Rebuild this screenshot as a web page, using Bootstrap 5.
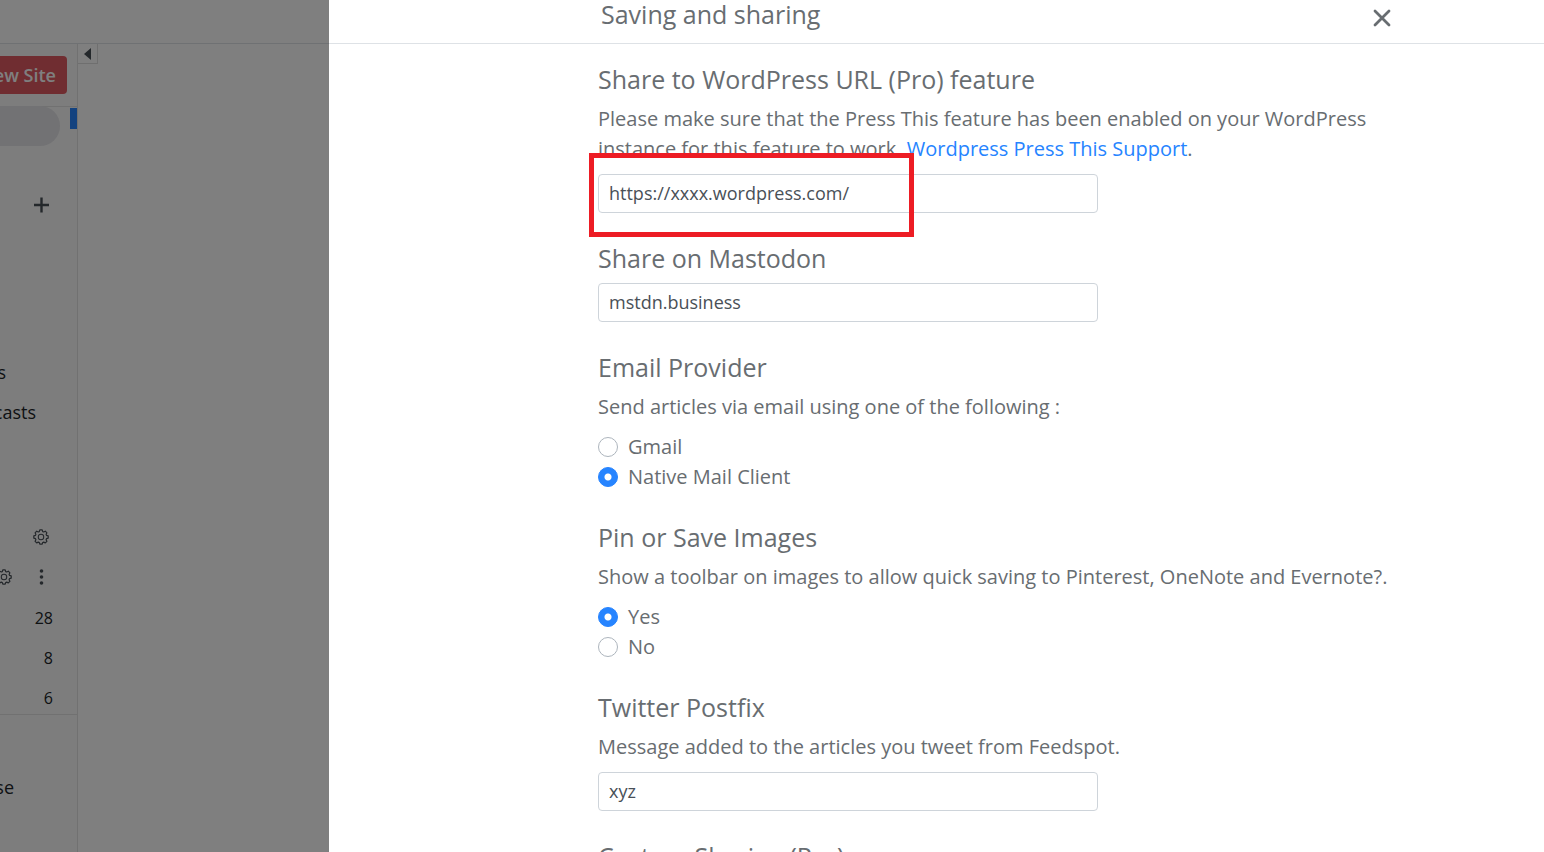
<!DOCTYPE html>
<html lang="en">
<head>
<meta charset="utf-8">
<meta name="viewport" content="width=device-width, initial-scale=1">
<title>Saving and sharing</title>
<link href="https://cdn.jsdelivr.net/npm/bootstrap@5.3.0/dist/css/bootstrap.min.css" rel="stylesheet">
<style>
  body { font-family: "Open Sans", "Noto Sans", sans-serif; font-size: 20px; line-height: 30px; color: #686d71; }
  .top-strip { height: 44px; border-bottom: 1px solid #dee2e6; }
  .shell { width: 329px; background: #fff; }
  .shade { background: rgba(0, 0, 0, .5); }
  .side { width: 78px; background: #fafafa; border-right: 1px solid #e2e2e2; font-size: 18px; color: #212529; white-space: nowrap; }
  .side-row { height: 40px; display: flex; align-items: center; justify-content: flex-end; flex-shrink: 0; }
  .side-top { height: 63px; border-bottom: 1px solid #e2e2e2; padding-right: 10px; }
  .side-add { margin: 38px 0 127px; }
  .side-tools { margin-top: 82px; }
  .btn-site { background: #e05a62; color: #fff; font-size: 18px; font-weight: 600; line-height: 24px; padding: 6px 10px; border-radius: 4px; }
  .pill { width: 120px; height: 40px; border-radius: 20px; background: #e4e4e8; margin: 0 17px 2px 0; flex: none; }
  .marker { width: 7px; height: 21px; top: 1px; background: #2684ff; }
  .count { font-size: 16px; padding: 8px 24px 0 0; }
  .ico-row { gap: 21px; padding-right: 28px; color: #495057; }
  .side-tools .ico-row { padding-top: 6px; }
  .ico-btn { border: 0; background: none; padding: 0; color: inherit; display: flex; flex: none; }
  .collapse-btn { width: 20px; height: 20px; border: 1px solid #dedede; border-width: 0 1px 1px 0; background: #fff; padding: 0; color: #495057; }
  .side-end { border-top: 1px solid #e2e2e2; padding-top: 52px; }
  .col-main { padding-left: 269px; }
  .panel-body { padding-top: 19px; }
  .inner { max-width: 808px; }
  h1, h2 { font-size: 25px; font-weight: 500; line-height: 32px; margin: 0; }
  h1 { line-height: 28px; padding-left: 3px; }
  h2 { margin-bottom: 9px; }
  .inner p { margin-bottom: 10px; }
  .inner section { margin-bottom: 29px; }
  .inner a { color: #2684ff; text-decoration: none; }
  .field { max-width: 500px; }
  .form-control { height: 39px; font-size: 18px; line-height: 27px; padding: 4px 10px 6px; color: #495057; border-color: #ced4da; border-radius: 4px; }
  .form-check { min-height: 30px; padding-left: 30px; margin: 0; }
  .form-check .form-check-input { width: 20px; height: 20px; margin: 5px 0 0 -30px; border-color: #adb5bd; }
  .form-check .form-check-input:checked { background-color: #2684ff; border-color: #2684ff; background-image: radial-gradient(circle, #fff 0 3px, transparent 4px); }
  .callout { border: 5px solid #ed1c24; width: 325px; height: 84px; left: -9px; top: -21px; pointer-events: none; }
  .close-btn { padding: 8px 14px 0 0; }
</style>
</head>
<body>
<svg class="d-none" aria-hidden="true">
  <symbol id="gear" viewBox="0 0 16 16">
    <path fill="currentColor" d="M8 4.754a3.246 3.246 0 1 0 0 6.492 3.246 3.246 0 0 0 0-6.492zM5.754 8a2.246 2.246 0 1 1 4.492 0 2.246 2.246 0 0 1-4.492 0z"/>
    <path fill="none" stroke="currentColor" stroke-width="1.2" stroke-linejoin="round" d="M6.8 .9h2.4l.5 1.7 1 .4 1.6-.8 1.6 1.6-.8 1.6.4 1 1.7.5v2.3l-1.7.5-.4 1 .8 1.6-1.6 1.6-1.6-.8-1 .4-.5 1.7H6.8l-.5-1.7-1-.4-1.6.8-1.6-1.6.8-1.6-.4-1L.8 9.2V6.9l1.7-.5.4-1-.8-1.6 1.6-1.6 1.6.8 1-.4z"/>
  </symbol>
</svg>
<div class="d-flex vh-100 overflow-hidden">
  <div class="shell position-relative flex-shrink-0 d-flex flex-column overflow-hidden">
    <header class="top-strip flex-shrink-0"></header>
    <div class="d-flex flex-grow-1">
      <nav class="side overflow-hidden flex-shrink-0" aria-label="Feeds">
        <div class="side-row side-top"><button type="button" class="btn btn-site flex-shrink-0">New Site</button></div>
        <div class="side-row position-relative">
          <span class="pill"></span>
          <span class="marker position-absolute end-0"></span>
        </div>
        <div class="side-row ico-row side-add">
          <button type="button" class="ico-btn" aria-label="Add"><svg width="16" height="16" viewBox="0 0 16 16" stroke="currentColor" stroke-width="2.4" fill="none"><path d="M8.5 .5v15M1 8h15"/></svg></button>
        </div>
        <div class="side-row" style="padding-right:71px">s</div>
        <div class="side-row" style="padding-right:41px">Podcasts</div>
        <div class="side-tools">
          <div class="side-row ico-row">
            <button type="button" class="ico-btn" aria-label="Settings"><svg width="16" height="16"><use href="#gear"/></svg></button>
          </div>
          <div class="side-row ico-row">
            <button type="button" class="ico-btn" aria-label="Folder settings"><svg width="16" height="16"><use href="#gear"/></svg></button>
            <button type="button" class="ico-btn" aria-label="More"><svg width="16" height="16" viewBox="0 0 16 16" fill="currentColor"><circle cx="8.5" cy="2" r="1.8"/><circle cx="8.5" cy="8" r="1.8"/><circle cx="8.5" cy="14" r="1.8"/></svg></button>
          </div>
        </div>
        <div class="side-row count">28</div>
        <div class="side-row count">8</div>
        <div class="side-row count">6</div>
        <div class="side-end"><div class="side-row" style="padding-right:63px">se</div></div>
      </nav>
      <button type="button" class="collapse-btn d-flex align-items-center justify-content-center" aria-label="Collapse sidebar"><svg width="8" height="12" viewBox="0 0 8 12"><path fill="currentColor" d="M7 0v12L0 6z"/></svg></button>
    </div>
    <div class="shade position-absolute top-0 bottom-0 start-0 end-0"></div>
  </div>

  <main class="flex-grow-1 bg-white overflow-hidden">
    <div class="top-strip col-main">
      <div class="inner d-flex justify-content-between align-items-start">
        <h1>Saving and sharing</h1>
        <button type="button" class="ico-btn close-btn" aria-label="Close"><svg width="20" height="20" viewBox="0 0 20 20" stroke="currentColor" stroke-width="2.8" stroke-linecap="round"><path d="M3 3l14 14M17 3L3 17"/></svg></button>
      </div>
    </div>
    <div class="col-main panel-body">
      <div class="inner">
        <section>
          <h2><label for="wp">Share to WordPress URL (Pro) feature</label></h2>
          <p>Please make sure that the Press This feature has been enabled on your WordPress instance for this feature to work. <a href="#">Wordpress Press This Support</a>.</p>
          <div class="field position-relative">
            <input id="wp" type="text" class="form-control" value="https://xxxx.wordpress.com/">
            <div class="callout position-absolute"></div>
          </div>
        </section>
        <section>
          <h2><label for="mastodon">Share on Mastodon</label></h2>
          <div class="field"><input id="mastodon" type="text" class="form-control" value="mstdn.business"></div>
        </section>
        <section>
          <h2>Email Provider</h2>
          <p>Send articles via email using one of the following :</p>
          <div class="form-check"><input class="form-check-input" type="radio" name="mail" id="gmail"><label class="form-check-label" for="gmail">Gmail</label></div>
          <div class="form-check"><input class="form-check-input" type="radio" name="mail" id="native" checked><label class="form-check-label" for="native">Native Mail Client</label></div>
        </section>
        <section>
          <h2>Pin or Save Images</h2>
          <p>Show a toolbar on images to allow quick saving to Pinterest, OneNote and Evernote?.</p>
          <div class="form-check"><input class="form-check-input" type="radio" name="pin" id="pinYes" checked><label class="form-check-label" for="pinYes">Yes</label></div>
          <div class="form-check"><input class="form-check-input" type="radio" name="pin" id="pinNo"><label class="form-check-label" for="pinNo">No</label></div>
        </section>
        <section>
          <h2><label for="postfix">Twitter Postfix</label></h2>
          <p>Message added to the articles you tweet from Feedspot.</p>
          <div class="field"><input id="postfix" type="text" class="form-control" value="xyz"></div>
        </section>
        <section>
          <h2>Custom Sharing (Pro)</h2>
        </section>
      </div>
    </div>
  </main>
</div>
<script src="https://cdn.jsdelivr.net/npm/bootstrap@5.3.0/dist/js/bootstrap.bundle.min.js"></script>
</body>
</html>
